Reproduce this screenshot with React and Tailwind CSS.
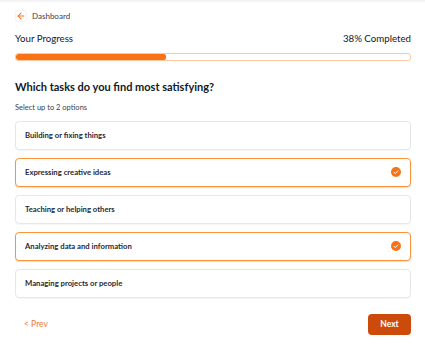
import React, { useState } from 'react';

const OPTIONS = [
  'Building or fixing things',
  'Expressing creative ideas',
  'Teaching or helping others',
  'Analyzing data and information',
  'Managing projects or people',
];

function CheckBadge() {
  return (
    <svg width="10" height="10" viewBox="0 0 20 20" className="shrink-0">
      <circle cx="10" cy="10" r="10" fill="#f97316" />
      <path d="M6 10.5l2.6 2.6L14 7.6" fill="none" stroke="#fff" strokeWidth="2" strokeLinecap="round" strokeLinejoin="round" />
    </svg>
  );
}

export default function App() {
  const [selected, setSelected] = useState([1, 3]);
  const progress = 38;

  const toggle = (i) => {
    setSelected((s) => (s.includes(i) ? s.filter((x) => x !== i) : s.length < 2 ? [...s, i] : s));
  };

  return (
    <div className="min-h-[344px] bg-white text-[#111827]" style={{ fontFamily: "Lato, 'Open Sans', sans-serif" }}>
      <div className="h-[2px] bg-[#f3f4f6]" />
      <div className="pl-[15px] pr-[14px]">
        {/* Back link */}
        <div className="flex items-center gap-[5px] pt-[5px] h-[23px]">
          <span className="flex h-[12px] w-[12px] items-center justify-center rounded-[3px] border border-[#f3f4f6] bg-white">
            <svg width="10" height="10" viewBox="0 0 24 24" fill="none" stroke="#f97316" strokeWidth="2.5" strokeLinecap="round" strokeLinejoin="round">
              <path d="M19 12H5" />
              <path d="M12 19l-7-7 7-7" />
            </svg>
          </span>
          <span className="text-[8px] text-[#374151]">Dashboard</span>
        </div>

        {/* Progress */}
        <div className="mt-[6px] flex items-center justify-between text-[9.7px] text-[#111827]">
          <span>Your Progress</span>
          <span>{progress}% Completed</span>
        </div>
        <div className="mt-[7px] h-[8px] w-full rounded-[3px] border border-[#fdc9a3] bg-white overflow-hidden">
          <div className="h-full rounded-[2px] bg-[#f97316]" style={{ width: `${progress}%` }} />
        </div>

        {/* Question */}
        <h2 className="mt-[18px] text-[11px] font-bold leading-[16px] text-[#111827]">
          Which tasks do you find most satisfying?
        </h2>
        <p className="mt-[7px] text-[7.5px] text-[#374151]">Select up to 2 options</p>

        <div className="mt-[8px] flex flex-col gap-[8px]">
          {OPTIONS.map((label, i) => {
            const on = selected.includes(i);
            return (
              <button
                key={label}
                onClick={() => toggle(i)}
                className={
                  'flex h-[29px] w-full items-center justify-between rounded-[4px] border bg-white pl-[9px] pr-[9px] text-left ' +
                  (on ? 'border-[#fb923c] shadow-[0_1px_1px_rgba(249,115,22,0.25)]' : 'border-[#e5e7eb] shadow-[0_1px_1px_rgba(0,0,0,0.04)]')
                }
              >
                <span className="text-[7.7px] font-bold text-[#1f2937]">{label}</span>
                {on && <CheckBadge />}
              </button>
            );
          })}
        </div>

        {/* Footer */}
        <div className="mt-[16px] flex items-center justify-between">
          <button className="pl-[9px] text-[8.5px] text-[#ea7a3a]">&lt; Prev</button>
          <button className="h-[21px] w-[43px] rounded-[4px] bg-[#cc4a0a] text-[8.5px] font-bold text-white">Next</button>
        </div>
      </div>
    </div>
  );
}
